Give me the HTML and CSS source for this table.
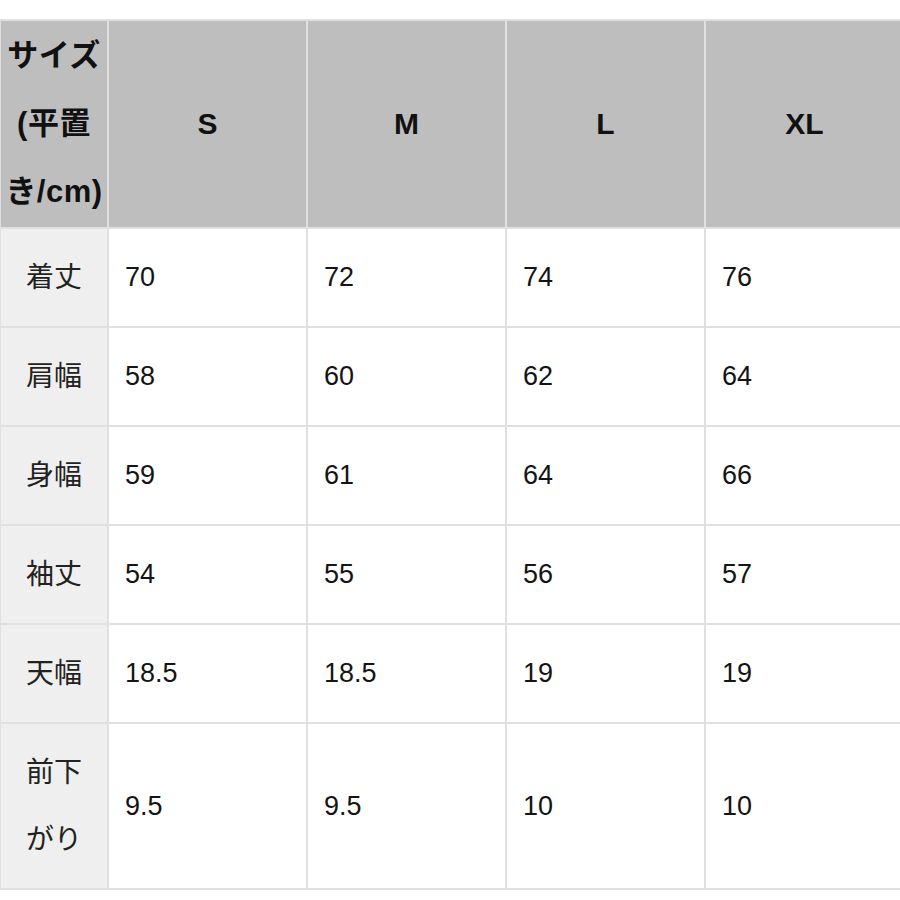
FILE: index.html
```html
<!DOCTYPE html>
<html lang="ja">
<head>
<meta charset="utf-8">
<title>サイズ表</title>
<link rel="stylesheet" href="styles.css">
</head>
<body>
<table class="size-table">
  <colgroup>
    <col class="col-label">
    <col class="col-size">
    <col class="col-size">
    <col class="col-size">
    <col class="col-size">
  </colgroup>
  <thead>
    <tr>
      <th class="head-label">サイズ<br>(平置<br>き/cm)</th>
      <th>S</th>
      <th>M</th>
      <th>L</th>
      <th>XL</th>
    </tr>
  </thead>
  <tbody>
    <tr><td class="label">着丈</td><td>70</td><td>72</td><td>74</td><td>76</td></tr>
    <tr><td class="label">肩幅</td><td>58</td><td>60</td><td>62</td><td>64</td></tr>
    <tr><td class="label">身幅</td><td>59</td><td>61</td><td>64</td><td>66</td></tr>
    <tr><td class="label">袖丈</td><td>54</td><td>55</td><td>56</td><td>57</td></tr>
    <tr><td class="label">天幅</td><td>18.5</td><td>18.5</td><td>19</td><td>19</td></tr>
    <tr><td class="label">前下<br>がり</td><td>9.5</td><td>9.5</td><td>10</td><td>10</td></tr>
  </tbody>
</table>
</body>
</html>
```
FILE: styles.css
```css
html, body {
  margin: 0;
  padding: 0;
  background: #ffffff;
}
body {
  padding-top: 19px;
  font-family: "Liberation Sans", "Noto Sans CJK JP", sans-serif;
  color: #141414;
  overflow: hidden;
}
.size-table {
  border-collapse: collapse;
  table-layout: fixed;
  width: 904px;
  margin-left: -1px;
}
.col-label { width: 108px; }
.col-size { width: 199px; }
.size-table th,
.size-table td {
  border: 2px solid #e0e0e0;
}
.size-table th {
  background: #bebebe;
  font-weight: bold;
  font-size: 30px;
  line-height: 68px;
  padding: 1px 0;
  text-align: center;
  color: #111;
}
.size-table th.head-label {
  font-size: 31px;
  padding: 1px 0;
  white-space: nowrap;
  letter-spacing: 0.5px;
}
.size-table td {
  font-size: 27px;
  line-height: 67px;
  padding: 15px 0 15px 16px;
  text-align: left;
  vertical-align: middle;
}
.size-table td.label {
  background: #efefef;
  text-align: center;
  padding: 15px 0;
  font-size: 28px;
  color: #222;
}
```
